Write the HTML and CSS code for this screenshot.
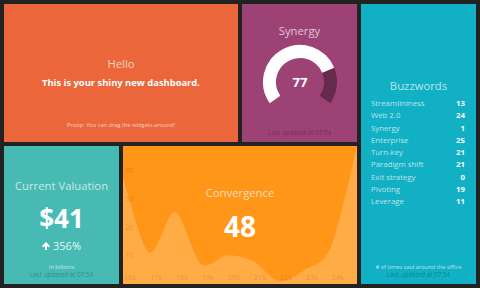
FILE: index.html
```html
<!DOCTYPE html>
<html lang="en">
<head>
  <meta charset="UTF-8" />
  <meta name="viewport" content="width=device-width, initial-scale=1.0"/>
  <title>My super sweet dashboard</title>
  <link rel="stylesheet" href="styles.css">
</head>
<body>
  <div class="gridster">
    <div class="widget widget-text">
      <h1 class="title">Hello</h1>
      <h3 class="text">This is your shiny new dashboard.</h3>
      <div class="footer">
        <p class="more-info">Protip: You can drag the widgets around!</p>
      </div>
    </div>

    <div class="widget widget-meter">
      <h1 class="title">Synergy</h1>
      <svg class="meter" width="80" height="80" viewBox="0 0 80 80">
        <path class="meter-track" d="M68.18 28.33 A30.5 30.5 0 0 1 64.98 57.49"/>
        <path class="meter-fill" d="M15.02 57.49 A30.5 30.5 0 1 1 68.18 28.33"/>
        <text class="meter-value" x="40" y="40">77</text>
      </svg>
      <div class="footer">
        <p class="updated-at">Last updated at 07:54</p>
      </div>
    </div>

    <div class="widget widget-list">
      <h1 class="title">Buzzwords</h1>
      <ul class="list">
        <li><span class="label">Streamlininess</span><span class="value">13</span></li>
        <li><span class="label">Web 2.0</span><span class="value">24</span></li>
        <li><span class="label">Synergy</span><span class="value">1</span></li>
        <li><span class="label">Enterprise</span><span class="value">25</span></li>
        <li><span class="label">Turn-key</span><span class="value">21</span></li>
        <li><span class="label">Paradigm shift</span><span class="value">21</span></li>
        <li><span class="label">Exit strategy</span><span class="value">0</span></li>
        <li><span class="label">Pivoting</span><span class="value">19</span></li>
        <li><span class="label">Leverage</span><span class="value">11</span></li>
      </ul>
      <div class="footer">
        <p class="more-info"># of times said around the office</p>
        <p class="updated-at">Last updated at 07:54</p>
      </div>
    </div>

    <div class="widget widget-number">
      <h1 class="title">Current Valuation</h1>
      <h2 class="value">$41</h2>
      <p class="change-rate">
        <svg class="arrow" width="8" height="8" viewBox="0 0 8 8">
          <path d="M4 0 L8 4 L6.6 5.4 L5 3.8 V8 H3 V3.8 L1.4 5.4 L0 4 Z"/>
        </svg>
        <span>356%</span>
      </p>
      <div class="footer">
        <p class="more-info">In billions</p>
        <p class="updated-at">Last updated at 07:54</p>
      </div>
    </div>

    <div class="widget widget-graph">
      <svg class="graph" id="graph" width="234" height="138" viewBox="0 0 234 138">
        <path class="area" id="area"/>
        <g class="y-ticks">
          <text x="2" y="24">40</text>
          <text x="2" y="52">30</text>
          <text x="2" y="81">20</text>
          <text x="2" y="109">10</text>
        </g>
        <g class="x-ticks" id="xTicks"></g>
      </svg>
      <h1 class="title">Convergence</h1>
      <h2 class="value">48</h2>
    </div>
  </div>

  <script>
    const points = [37, 11, 25, 7, 10, 8, 1, 5, 13, 48];
    const w = 234;
    const h = 138;
    const max = 48;
    const step = w / (points.length - 1);
    const pts = points.map((v, i) => [i * step, h - v * h / max]);

    // cardinal spline, tension 0.7
    const k = 0.15;
    let d = `M${pts[0][0]},${pts[0][1]}`;
    for (let i = 0; i < pts.length - 1; i++) {
      const p0 = pts[i - 1] || pts[i];
      const p1 = pts[i];
      const p2 = pts[i + 1];
      const p3 = pts[i + 2] || pts[i + 1];
      const c1x = p1[0] + (p2[0] - p0[0]) * k;
      const c1y = p1[1] + (p2[1] - p0[1]) * k;
      const c2x = p2[0] - (p3[0] - p1[0]) * k;
      const c2y = p2[1] - (p3[1] - p1[1]) * k;
      d += ` C${c1x},${c1y} ${c2x},${c2y} ${p2[0]},${p2[1]}`;
    }
    d += ` L${w},${h} L0,${h} Z`;
    document.getElementById('area').setAttribute('d', d);

    const xTicks = document.getElementById('xTicks');
    for (let i = 0; i < 9; i++) {
      const t = document.createElementNS('http://www.w3.org/2000/svg', 'text');
      t.setAttribute('x', i * step + 1);
      t.setAttribute('y', 131);
      t.textContent = (16 + i) + 's';
      xTicks.appendChild(t);
    }
  </script>
</body>
</html>
```

FILE: styles.css
```css
* {
  box-sizing: border-box;
}
body {
  margin: 0;
  background: #222;
  font-family: "Open Sans", sans-serif;
  color: #fff;
}
h1, h2, h3, p, ul {
  margin: 0;
  padding: 0;
}
.gridster {
  display: grid;
  grid-template-columns: repeat(4, 1fr);
  grid-template-rows: repeat(2, 1fr);
  gap: 4px;
  padding: 4px;
  height: 288px;
}
.widget {
  display: flex;
  flex-direction: column;
  align-items: center;
  text-align: center;
  position: relative;
  overflow: hidden;
}
.title {
  font-size: 11.3px;
  line-height: 14px;
  font-weight: 400;
  color: rgba(255, 255, 255, 0.7);
}
.value {
  font-weight: 700;
  color: #fff;
}
.footer {
  margin-top: auto;
  padding-bottom: 4.7px;
}
.more-info {
  font-size: 5.7px;
  line-height: 7.5px;
  color: rgba(255, 255, 255, 0.7);
}
.updated-at {
  font-size: 6.3px;
  line-height: 8px;
  color: rgba(0, 0, 0, 0.3);
}

/* text */
.widget-text {
  grid-column: span 2;
  background: #ec663c;
  padding-top: 52.8px;
}
.widget-text .text {
  margin-top: 6px;
  font-size: 9.4px;
  line-height: 12px;
  font-weight: 700;
}
.widget-text .footer {
  padding-bottom: 12.7px;
}

/* meter */
.widget-meter {
  background: #9c4274;
  padding-top: 19.8px;
}
.meter {
  display: block;
  margin-top: 4.2px;
}
.meter path {
  fill: none;
  stroke-width: 13;
  stroke-linecap: butt;
}
.meter-fill {
  stroke: #fff;
}
.meter-track {
  stroke: #662b4c;
}
.meter-value {
  font-size: 13px;
  font-weight: 700;
  fill: #fff;
  text-anchor: middle;
  dominant-baseline: central;
}

/* list */
.widget-list {
  grid-row: span 2;
  background: #12b0c5;
  padding-top: 75.2px;
}
.list {
  list-style: none;
  align-self: stretch;
  margin-top: 4px;
  padding: 0 11px 0 10px;
}
.list li {
  display: flex;
  justify-content: space-between;
  font-size: 7.8px;
  line-height: 12.25px;
}
.list .label {
  color: rgba(255, 255, 255, 0.7);
}
.list .value {
  font-weight: 700;
}

/* number */
.widget-number {
  background: #47bbb3;
  padding-top: 32.5px;
}
.widget-number .value {
  margin-top: 10px;
  font-size: 26px;
  line-height: 30px;
}
.change-rate {
  display: flex;
  align-items: center;
  gap: 3px;
  margin-top: 6px;
  font-size: 11px;
  line-height: 14px;
  color: rgba(255, 255, 255, 0.9);
}
.arrow {
  fill: #fff;
}

/* graph */
.widget-graph {
  grid-column: span 2;
  background: #ff9618;
  padding-top: 40.3px;
}
.graph {
  position: absolute;
  left: 0;
  top: 0;
}
.graph .area {
  fill: rgba(255, 255, 255, 0.2);
}
.graph text {
  font-family: "Open Sans", sans-serif;
  font-size: 7.2px;
  fill: rgba(0, 0, 0, 0.16);
  dominant-baseline: central;
}
.widget-graph .title,
.widget-graph .value {
  position: relative;
}
.widget-graph .value {
  margin-top: 10px;
  font-size: 28px;
  line-height: 32px;
}
```
